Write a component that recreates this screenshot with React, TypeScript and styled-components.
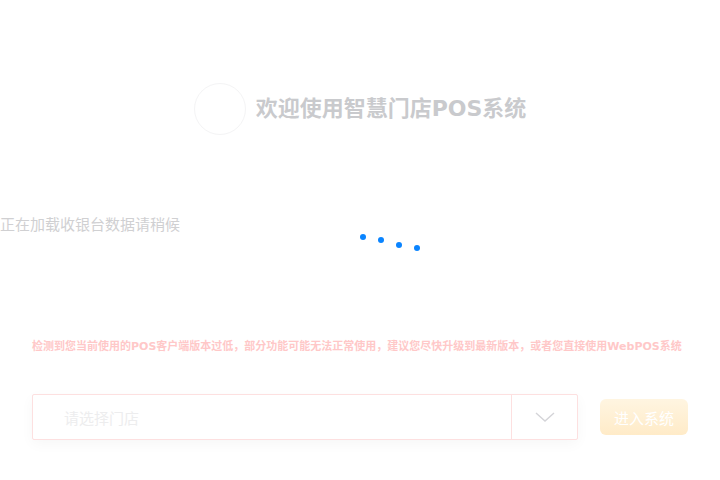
import styled, { createGlobalStyle } from 'styled-components';

const GlobalStyle = createGlobalStyle`
  html, body {
    margin: 0;
    padding: 0;
    background: #ffffff;
  }
  body {
    font-family: "DejaVu Sans", "Noto Sans CJK SC", sans-serif;
    overflow: hidden;
  }
  * {
    box-sizing: border-box;
  }
`;

const dots = [0, 3, 8, 11];

const App = () => {
  return (
    <Page>
      <GlobalStyle />
      <Header>
        <Logo />
        <Title>欢迎使用智慧门店POS系统</Title>
      </Header>
      <LoadingRow>
        <LoadingText>正在加载收银台数据请稍候</LoadingText>
        <Dots>
          {dots.map((offset, i) => (
            <Dot key={i} $offset={offset} />
          ))}
        </Dots>
      </LoadingRow>
      <Panel>
        <Notice>
          检测到您当前使用的POS客户端版本过低，部分功能可能无法正常使用，建议您尽快升级到最新版本，或者您直接使用WebPOS系统
        </Notice>
        <FormRow>
          <SelectBox>
            <Placeholder>请选择门店</Placeholder>
            <Arrow>
              <svg width="20" height="10" viewBox="0 0 20 10" fill="none">
                <path d="M1 1 L10 9 L19 1" stroke="#d4d4d8" strokeWidth="1.4" />
              </svg>
            </Arrow>
          </SelectBox>
          <EnterButton>进入系统</EnterButton>
        </FormRow>
      </Panel>
    </Page>
  );
};

export default App;

const Page = styled.div`
  width: 720px;
  height: 480px;
  display: flex;
  flex-direction: column;
  overflow: hidden;
`;

const Header = styled.div`
  display: flex;
  align-items: center;
  justify-content: center;
  gap: 10px;
  padding-top: 83px;
`;

const Logo = styled.div`
  width: 52px;
  height: 52px;
  border-radius: 50%;
  border: 1px solid #f4f4f5;
  background: #ffffff;
`;

const Title = styled.div`
  font-size: 22px;
  font-weight: bold;
  color: #c9cacd;
  line-height: 30px;
`;

const LoadingRow = styled.div`
  display: grid;
  grid-template-columns: 360px auto;
  align-items: start;
  margin-top: 79px;
  height: 40px;
`;

const LoadingText = styled.div`
  font-size: 15px;
  line-height: 22px;
  color: #d0d0d2;
  white-space: nowrap;
`;

const Dots = styled.div`
  display: flex;
  gap: 12px;
  padding-top: 20px;
`;

const Dot = styled.span<{ $offset: number }>`
  width: 6px;
  height: 6px;
  border-radius: 50%;
  background: #0a84ff;
  margin-top: ${(p) => p.$offset}px;
`;

const Panel = styled.div`
  margin-top: 85px;
  padding: 0 32px;
`;

const Notice = styled.div`
  font-size: 11px;
  font-weight: bold;
  line-height: 16px;
  color: #ffc8c8;
  white-space: nowrap;
`;

const FormRow = styled.div`
  display: flex;
  align-items: center;
  gap: 22px;
  margin-top: 39px;
`;

const SelectBox = styled.div`
  width: 546px;
  height: 46px;
  display: flex;
  border: 1px solid #fde0e0;
  border-radius: 2px;
  background: #ffffff;
  box-shadow: 0 4px 14px rgba(0, 0, 0, 0.035);
`;

const Placeholder = styled.div`
  flex: 1;
  display: flex;
  align-items: center;
  padding-left: 31px;
  font-size: 15px;
  color: #ededee;
`;

const Arrow = styled.div`
  width: 66px;
  display: flex;
  align-items: center;
  justify-content: center;
  border-left: 1px solid #fde0e0;
`;

const EnterButton = styled.button`
  width: 88px;
  height: 36px;
  border: none;
  border-radius: 6px;
  background: linear-gradient(180deg, #fff5e1 0%, #ffebc8 100%);
  color: #ffffff;
  font-family: inherit;
  font-size: 15px;
  padding: 0;
`;
